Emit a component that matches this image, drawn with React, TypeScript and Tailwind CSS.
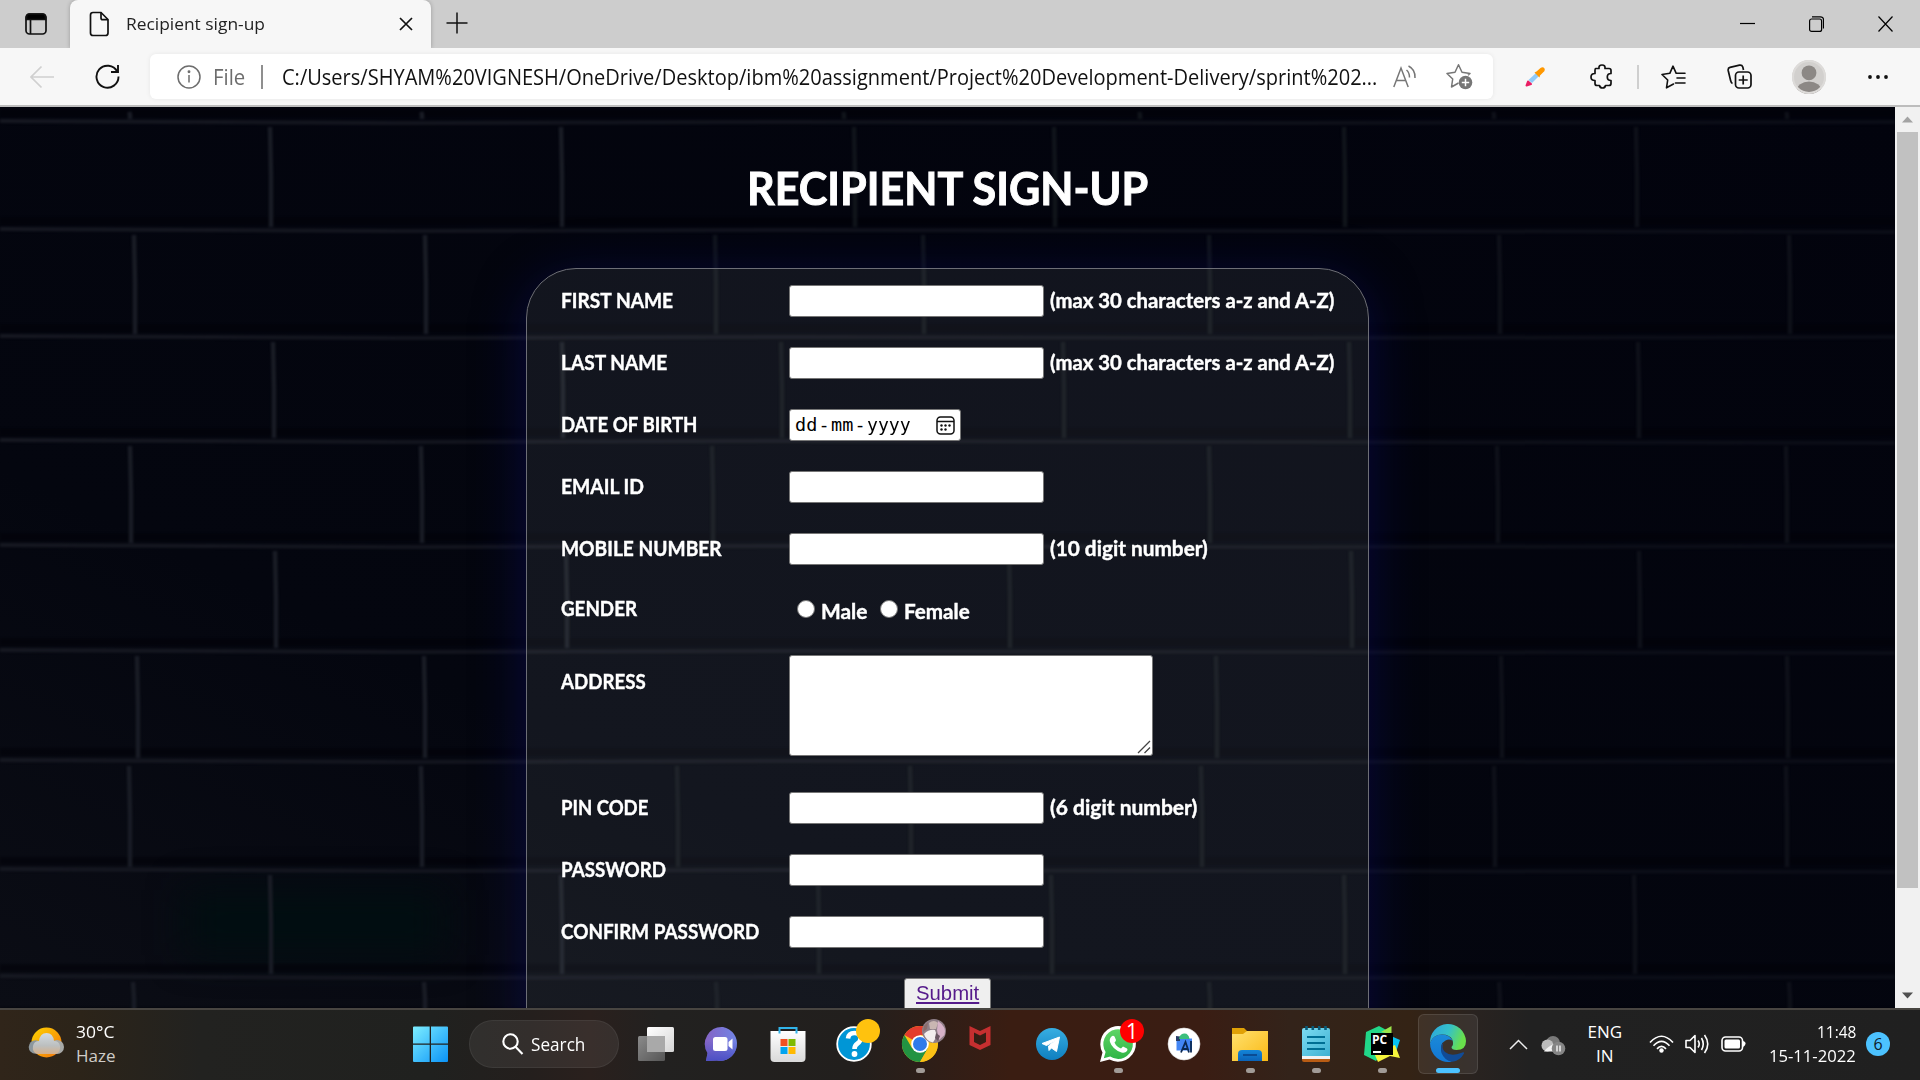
import { useLayoutEffect, useRef, useState } from "react";
import type { ReactNode } from "react";

/** A single line of text stretched horizontally to an exact width. */
function Fit({ w, className = "", children }: { w: number; className?: string; children: ReactNode }) {
  const ref = useRef<HTMLSpanElement>(null);
  const [scale, setScale] = useState(1);
  useLayoutEffect(() => {
    if (ref.current) setScale(w / ref.current.offsetWidth);
  }, [w]);
  return (
    <span className={`block shrink-0 ${className}`} style={{ width: w }}>
      <span ref={ref} className="inline-block origin-left whitespace-nowrap" style={{ transform: `scaleX(${scale})` }}>
        {children}
      </span>
    </span>
  );
}

const UI = "font-['Open_Sans','Noto_Sans',sans-serif]";
const BODY = "font-['Lato',sans-serif] font-bold [-webkit-text-stroke:0.4px_white]";

/* ---------- brick wall ---------- */

const COURSES: { top: number; bottom: number; joints: number[] }[] = [
  { top: 107, bottom: 122, joints: [130, 422, 844, 1140, 1494, 1787] },
  { top: 122, bottom: 230, joints: [271, 562, 855, 1055, 1345, 1637] },
  { top: 230, bottom: 337, joints: [135, 426, 716, 924, 1210, 1500, 1790] },
  { top: 337, bottom: 441, joints: [274, 563, 782, 1064, 1350, 1639] },
  { top: 441, bottom: 546, joints: [131, 422, 713, 1210, 1498, 1787] },
  { top: 546, bottom: 651, joints: [276, 567, 1010, 1352, 1640] },
  { top: 651, bottom: 761, joints: [138, 425, 1217, 1502, 1788] },
  { top: 761, bottom: 870, joints: [130, 422, 678, 911, 1202, 1495, 1787] },
  { top: 870, bottom: 977, joints: [271, 562, 819, 1052, 1345, 1635] },
  { top: 977, bottom: 1020, joints: [134, 425, 717, 1210, 1500, 1790] },
];

function Bricks() {
  return (
    <svg className="absolute inset-0" width="1895" height="901" viewBox="0 107 1895 901">
      <defs>
        <filter id="soft" x="-5%" y="-5%" width="110%" height="110%" colorInterpolationFilters="sRGB">
          <feGaussianBlur stdDeviation="1.2" />
        </filter>
        <filter id="patch" x="-50%" y="-100%" width="200%" height="300%" colorInterpolationFilters="sRGB">
          <feGaussianBlur stdDeviation="18" />
        </filter>
        <linearGradient id="wall" x1="0" y1="1" x2="1" y2="0">
          <stop offset="0" stopColor="#0b0d15" />
          <stop offset=".3" stopColor="#04060f" />
          <stop offset="1" stopColor="#02030d" />
        </linearGradient>
        <linearGradient id="mortar" gradientUnits="userSpaceOnUse" x1="0" y1="0" x2="1895" y2="0">
          <stop offset="0" stopColor="#161821" />
          <stop offset=".5" stopColor="#10121b" />
          <stop offset="1" stopColor="#0b0d17" />
        </linearGradient>
      </defs>
      <rect y="107" width="1895" height="901" fill="url(#wall)" />
      <rect x="185" y="890" width="260" height="65" fill="#010e11" filter="url(#patch)" />
      <g filter="url(#soft)" fill="none">
        {COURSES.map((c, i) => (
          <g key={c.top}>
            <path d={`M0 ${c.bottom - 9}H1895`} stroke="#010109" strokeOpacity=".6" strokeWidth="7" />
            <path
              d={`M0 ${c.bottom - 1}L400 ${c.bottom + 1}L800 ${c.bottom}L1300 ${c.bottom + 1}L1895 ${c.bottom + (i % 2 ? 2 : 0)}`}
              stroke="url(#mortar)"
              strokeWidth="4"
            />
            {c.joints.map((x) => (
              <path
                key={x}
                d={`M${x - 1} ${c.top + 5}L${x} ${(c.top + c.bottom) / 2}L${x} ${c.bottom - 3}`}
                stroke={x < 600 ? "#191c25" : x < 1400 ? "#10141b" : "#0e1019"}
                strokeWidth="4.500"
              />
            ))}
          </g>
        ))}
      </g>
    </svg>
  );
}

/* ---------- browser chrome ---------- */

function TabStrip() {
  return (
    <div className="flex h-12 items-center bg-[#cdcdcd] pl-[25px] pr-[27px]">
      <svg className="shrink-0" width="22" height="24" viewBox="0 0 22 24" fill="none" stroke="#111" strokeWidth="1.7">
        <rect x="1" y="2" width="20" height="20" rx="3.5" />
        <path d="M1.5 7.5V5q0-3 3-3h13q3 0 3 3v2.500z" fill="#000" />
        <path d="M5.500 8v14" />
      </svg>
      <div className="ml-[23px] flex h-12 w-[361px] shrink-0 items-center rounded-t-[8px] bg-[#f7f7f7] pl-[19px] pr-[18px] shadow-[0_0_4px_rgba(0,0,0,0.25)]">
        <svg width="20" height="26" viewBox="0 0 20 26" fill="none" stroke="#111" strokeWidth="1.7">
          <path d="M4 1.500h8L19 8.500V22q0 2.500-2.500 2.500H4Q1.500 24.500 1.500 22V4Q1.500 1.500 4 1.500z" />
          <path d="M12 1.500V7q0 1.700 1.700 1.700H19" />
        </svg>
        <Fit w={139} className={`ml-[17px] text-[17px] leading-6 text-[#222] ${UI}`}>
          Recipient sign-up
        </Fit>
        <svg className="ml-auto" width="14" height="14" viewBox="0 0 14 14" stroke="#111" strokeWidth="1.700">
          <path d="M1 1L13 13M13 1L1 13" />
        </svg>
      </div>
      <svg className="mb-[2px] ml-[15px]" width="22" height="22" viewBox="0 0 22 22" stroke="#111" strokeWidth="1.500">
        <path d="M11 .5V21.500M.5 11H21.500" />
      </svg>
      <div className="ml-auto flex items-center gap-[54px]">
        <svg width="15" height="16" viewBox="0 0 15 16" stroke="#000" strokeWidth="1.200">
          <path d="M0 7.500H15" />
        </svg>
        <svg width="15" height="16" viewBox="0 0 15 16" fill="none" stroke="#000" strokeWidth="1.200">
          <rect x=".6" y="3" width="12" height="12.400" rx="2" />
          <path d="M3 .8h8.500q3 0 3 3V12.500" />
        </svg>
        <svg width="15" height="16" viewBox="0 0 15 16" stroke="#000" strokeWidth="1.200">
          <path d="M.5.5L14.500 15.500M14.500.5L.5 15.500" />
        </svg>
      </div>
    </div>
  );
}

function Toolbar() {
  return (
    <div className="flex h-[59px] items-center border-b-2 border-[#bdbdbd] bg-[#f7f7f7] pl-[30px]">
      <svg className="shrink-0" width="24" height="24" viewBox="0 0 24 24" fill="none" stroke="#d0d0d0" strokeWidth="1.700">
        <path d="M24 12H1.500M11.500 1.500L1 12L11.500 22.500" />
      </svg>
      <svg className="ml-[41px] shrink-0" width="25" height="25" viewBox="0 0 25 25" fill="none" stroke="#111" strokeWidth="1.900">
        <path d="M22.200 7.500A11 11 0 1 0 23.500 12.500" />
        <path d="M23 1V8H16" />
      </svg>
      <div className="ml-[30px] flex h-[45px] w-[1343px] shrink-0 items-center rounded-md bg-white pl-[27px] shadow-[0_0_5px_rgba(0,0,0,0.07)]">
        <svg width="24" height="24" viewBox="0 0 24 24" fill="none" stroke="#6d6d6d" strokeWidth="1.500">
          <circle cx="12" cy="12" r="11" />
          <path d="M12 10V17.500" />
          <circle cx="12" cy="6.800" r=".7" fill="#6d6d6d" />
        </svg>
        <Fit w={32} className={`ml-[12px] text-[21px] leading-7 text-[#6d6d6d] ${UI}`}>
          File
        </Fit>
        <div className="ml-[16px] h-6 w-[1.500px] bg-[#8f8f8f]" />
        <Fit w={1095} className={`ml-[19px] text-[21px] leading-7 text-[#111] ${UI}`}>
          C:/Users/SHYAM%20VIGNESH/OneDrive/Desktop/ibm%20assignment/Project%20Development-Delivery/sprint%202...
        </Fit>
        <svg className="ml-[16.500px] shrink-0" width="24" height="24" viewBox="0 0 24 24" fill="none" stroke="#767676" strokeWidth="1.500">
          <path d="M.8 22L8 3L15.200 22M3.300 15.500H12.700" />
          <path d="M13.500 5Q16.500 7.500 16.500 12.500M15.500 1Q22.500 4.500 22 13" />
        </svg>
        <svg className="ml-[29px] shrink-0" width="27" height="27" viewBox="0 0 27 27" fill="none" stroke="#767676" strokeWidth="1.500">
          <path d="M12.500 20L5.500 24L6.700 16L1 10.500L9 9.300L12.500 1.800L16 9.300L24 10.500L22 12.300" strokeLinejoin="round" />
          <circle cx="19.500" cy="19.500" r="6.800" fill="#767676" stroke="none" />
          <path d="M19.500 15.800V23.200M15.800 19.500H23.200" stroke="#fff" />
        </svg>
      </div>
      <svg className="ml-[32px] shrink-0" width="20" height="20" viewBox="0 0 20 20">
        <path d="M1.500 18.500L3 14.500L6 17z" fill="#e91e63" stroke="#e91e63" strokeWidth="2" strokeLinejoin="round" />
        <path d="M3.500 13L11 6L14 9L7 16z" fill="#90caf9" />
        <path d="M9.500 5.500L11.500 4.500L15.500 1Q18-.5 19.500 1.500Q20.500 3.500 18 5.500L15 8.500L14.500 10.500z" fill="#ff9800" />
      </svg>
      <svg className="ml-[45px] shrink-0" width="23" height="25" viewBox="0 0 23 25" fill="none" stroke="#111" strokeWidth="1.700" strokeLinejoin="round">
        <path d="M5.500 4.500H9Q8.500 1 12 1T15 4.500H19Q21 4.500 21 6.500V9.500Q17.300 9.500 17.300 13T21 16.500V19.500Q21 21.500 19 21.500H15.500Q15 24 12.500 24T9.500 21.500H7Q5 21.500 5 19.500V16.500Q1 16.500 1 13T5 9.500V6.500Q5 4.500 5.500 4.500z" />
      </svg>
      <div className="ml-[24px] h-6 w-[1.500px] bg-[#cfcfcf]" />
      <svg className="ml-[22.500px] shrink-0" width="25" height="24" viewBox="0 0 25 24" fill="none" stroke="#111" strokeWidth="1.600" strokeLinejoin="round" strokeLinecap="round">
        <path d="M12.500 19L5.500 22.800L6.700 15L1 9.500L8.800 8.300L12 1.200L15.200 8.300H24M16 13H24M14.500 18H24" />
      </svg>
      <svg className="ml-[41px] shrink-0" width="25" height="25" viewBox="0 0 25 25" fill="none" stroke="#111" strokeWidth="1.700">
        <path d="M5.500 19.500Q4.200 19 3.600 16.500L1.200 6.500Q.8 4 3 3.400L12.500 1.200Q15 .8 15.800 3L16.500 6" />
        <rect x="8.500" y="8" width="15.500" height="16" rx="3.500" />
        <path d="M16.200 11.500V20.500M11.700 16H20.700" />
      </svg>
      <svg className="ml-[40px] shrink-0" width="34" height="34" viewBox="0 0 34 34">
        <defs>
          <clipPath id="profile"><circle cx="17" cy="17" r="17" /></clipPath>
        </defs>
        <g clipPath="url(#profile)">
          <rect width="34" height="34" fill="#d2d0ce" />
          <circle cx="17" cy="12.800" r="7.400" fill="#8c8885" />
          <ellipse cx="17" cy="31" rx="12.500" ry="9.500" fill="#8c8885" />
        </g>
        <circle cx="17" cy="17" r="16" fill="none" stroke="#dddbd9" strokeWidth="2" />
      </svg>
      <svg className="ml-[42px] shrink-0" width="20" height="4" viewBox="0 0 20 4" fill="#111">
        <circle cx="2" cy="2" r="1.900" /><circle cx="10" cy="2" r="1.900" /><circle cx="18" cy="2" r="1.900" />
      </svg>
    </div>
  );
}

/* ---------- form ---------- */

const BOX = "shrink-0 rounded-[3px] border border-[#767676] bg-white";

function Label({ w, children }: { w: number; children: string }) {
  return (
    <div className="w-[228px] shrink-0 pb-[2px]">
      <Fit w={w} className="leading-6">{children}</Fit>
    </div>
  );
}

function Row({ label, w, hint, hintW = 0 }: { label: string; w: number; hint?: string; hintW?: number }) {
  return (
    <div className="flex h-[62px] items-center">
      <Label w={w}>{label}</Label>
      <div className={`h-8 w-[255px] ${BOX}`} />
      {hint && <Fit w={hintW} className="ml-[5.500px] pb-[2px] leading-6">{hint}</Fit>}
    </div>
  );
}

function Radio() {
  return <span className="block size-[18px] shrink-0 rounded-full border-[1.500px] border-[#767676] bg-white" />;
}

function SignUpForm() {
  return (
    <div className={`relative flex w-[1895px] flex-col items-center text-white ${BODY}`}>
      <h1 className="mt-[51px] h-[60px] text-[46px] leading-[60px] [-webkit-text-stroke:1px_white]">
        <Fit w={401}>RECIPIENT SIGN-UP</Fit>
      </h1>
      <div className="mt-[50px] h-[860px] w-[843px] rounded-[50px] border border-[#6d6e76] bg-[rgba(245,248,255,0.065)] pl-[34px] pt-[1px] text-[20px] shadow-[0_10px_50px_rgba(9,12,110,0.5)]">
        <Row label="FIRST NAME" w={112} hint="(max 30 characters a-z and A-Z)" hintW={284} />
        <Row label="LAST NAME" w={106} hint="(max 30 characters a-z and A-Z)" hintW={284} />
        <div className="flex h-[62px] items-center">
          <Label w={136}>DATE OF BIRTH</Label>
          <div className={`flex h-8 w-[172px] items-center pl-[5px] pr-[5px] font-['DejaVu_Sans_Mono',monospace] text-[18.500px] font-normal leading-6 text-black [-webkit-text-stroke:0] ${BOX}`}>
            <Fit w={22}>dd</Fit>
            <span className="w-[14px] text-center">-</span>
            <Fit w={22}>mm</Fit>
            <span className="w-[14px] text-center">-</span>
            <Fit w={44}>yyyy</Fit>
            <svg className="ml-auto" width="19" height="19" viewBox="0 0 19 19" fill="none" stroke="#111" strokeWidth="1.500">
              <rect x="1" y="1" width="17" height="17" rx="3.500" />
              <path d="M1 5.500H18" />
              <g fill="#111" stroke="none">
                <circle cx="5.500" cy="9.500" r="1.200" /><circle cx="9.500" cy="9.500" r="1.200" /><circle cx="13.500" cy="9.500" r="1.200" />
                <circle cx="5.500" cy="13.500" r="1.200" /><circle cx="9.500" cy="13.500" r="1.200" />
              </g>
            </svg>
          </div>
        </div>
        <Row label="EMAIL ID" w={83} />
        <Row label="MOBILE NUMBER" w={161} hint="(10 digit number)" hintW={158} />
        <div className="flex h-[62px] items-center pb-[4px]">
          <Label w={76}>GENDER</Label>
          <div className="flex items-center pl-2">
            <Radio />
            <Fit w={46} className="ml-[6px] mt-[4px] leading-6">Male</Fit>
            <span className="w-[13px]" />
            <Radio />
            <Fit w={66} className="ml-[6px] mt-[4px] leading-6">Female</Fit>
          </div>
        </div>
        <div className="flex h-[135px] items-start pt-[13px]">
          <div className="pt-[14px]"><Label w={85}>ADDRESS</Label></div>
          <div className={`flex h-[101px] w-[364px] items-end justify-end p-[1px] ${BOX}`}>
            <svg width="14" height="14" viewBox="0 0 14 14" stroke="#444" strokeWidth="1.300">
              <path d="M1 13L13 1M7.500 13L13 7.500" />
            </svg>
          </div>
        </div>
        <Row label="PIN CODE" w={87} hint="(6 digit number)" hintW={147} />
        <Row label="PASSWORD" w={105} />
        <Row label="CONFIRM PASSWORD" w={198} />
        <div className="mt-[15px] flex justify-center pr-[34px]">
          <div className="h-9 w-[87px] rounded-[3px] border border-[#767676] bg-[#efefef] pl-[11px] font-['Liberation_Sans',sans-serif] text-[20px] font-normal leading-7 text-[#551a8b] [-webkit-text-stroke:0]">
            <Fit w={63}><span className="underline underline-offset-2">Submit</span></Fit>
          </div>
        </div>
      </div>
    </div>
  );
}

function Scrollbar() {
  return (
    <div className="flex w-[25px] shrink-0 flex-col items-center bg-[#f1f1f1]">
      <svg className="my-[9px]" width="11" height="7" viewBox="0 0 11 7"><path d="M0 6.500L5.500.5L11 6.500z" fill="#a3a3a3" /></svg>
      <div className="h-[756px] w-[21px] bg-[#c1c1c1]" />
      <svg className="mb-[9px] mt-auto" width="11" height="7" viewBox="0 0 11 7"><path d="M0 .5L5.500 6.500L11 .5z" fill="#505050" /></svg>
    </div>
  );
}

/* ---------- taskbar ---------- */

function TaskApp({ running, wide, children }: { running?: boolean; wide?: boolean; children: ReactNode }) {
  return (
    <div className="flex w-[66px] shrink-0 justify-center">
      <div className={wide ? "relative flex h-[60px] w-[60px] items-center justify-center rounded-md border border-white/10 bg-white/[0.07]" : "relative flex h-[60px] w-[60px] items-center justify-center"}>
        {children}
        {running && <span className="absolute bottom-[1px] left-[25.500px] h-[5px] w-[9px] rounded-full bg-[#a19b97]" />}
        {wide && <span className="absolute bottom-0 left-[17px] h-[5px] w-6 rounded-full bg-[#4cc2ff]" />}
      </div>
    </div>
  );
}

const ICON = { width: 48, height: 48, viewBox: "0 0 48 48", overflow: "visible" };

function TaskIcons() {
  return (
    <>
      <TaskApp>
        <svg {...ICON}>
          <defs>
            <linearGradient id="tvw" x1="0" y1="0" x2="1" y2="1"><stop stopColor="#fff" /><stop offset="1" stopColor="#d5d5d5" /></linearGradient>
            <linearGradient id="tvg" x1="0" y1="0" x2="1" y2="1"><stop stopColor="#8b8b8b" /><stop offset="1" stopColor="#565656" /></linearGradient>
          </defs>
          <rect x="6" y="16" width="27" height="25" rx="1.500" fill="url(#tvg)" />
          <rect x="15" y="7" width="27" height="25" rx="1.500" fill="url(#tvw)" />
          <path d="M15 16H33V32H15z" fill="#a9a9a9" />
        </svg>
      </TaskApp>
      <TaskApp>
        <svg {...ICON}>
          <defs><linearGradient id="chat" x1="0" y1="0" x2="1" y2="0"><stop stopColor="#8563c4" /><stop offset="1" stopColor="#7185e6" /></linearGradient>
            <linearGradient id="chat2" x1="0" y1="0" x2="0" y2="1"><stop offset=".4" stopColor="#4b4fc4" stopOpacity="0" /><stop offset="1" stopColor="#4b4fc4" /></linearGradient></defs>
          {["url(#chat)", "url(#chat2)"].map((f) => (
            <path key={f} d="M24 7A17 17 0 1 1 18 40.500L7 41L8.500 33A17 17 0 0 1 24 7z" fill={f} transform="translate(1 0)" />
          ))}
          <rect x="15" y="17" width="14.500" height="14" rx="2.500" fill="#fff" />
          <path d="M30.500 22L34.500 18.500V29.500L30.500 26z" fill="#fff" />
        </svg>
      </TaskApp>
      <TaskApp>
        <svg {...ICON}>
          <defs><linearGradient id="store" x1="0" y1="0" x2="0" y2="1"><stop stopColor="#fff" /><stop offset="1" stopColor="#d9d9d9" /></linearGradient></defs>
          <path d="M15.500 13.500V8H32.500V13.500" fill="none" stroke="#31b4ea" strokeWidth="2" />
          <path d="M6.500 11H41.500V38Q41.500 42 37.500 42H10.500Q6.500 42 6.500 38z" fill="url(#store)" />
          <path d="M15.500 11V13.500M32.500 11V13.500" stroke="#31b4ea" strokeWidth="2" />
          <path d="M16.500 19H23.500V26H16.500z" fill="#f25022" /><path d="M24.500 19H31.500V26H24.500z" fill="#7fba00" />
          <path d="M16.500 27H23.500V34H16.500z" fill="#00a4ef" /><path d="M24.500 27H31.500V34H24.500z" fill="#ffb900" />
        </svg>
      </TaskApp>
      <TaskApp>
        <svg {...ICON}>
          <circle cx="24" cy="24" r="16.800" fill="#0096d6" stroke="#fff" strokeWidth="1.800" />
          <path d="M18 18.500Q18.500 13 24.500 13T30.500 18.500Q30.500 21.500 27.500 23.500Q24.500 25.500 24.500 29" fill="none" stroke="#fff" strokeWidth="4.600" />
          <circle cx="24.500" cy="34" r="2.900" fill="#fff" />
          <circle cx="38" cy="11" r="12" fill="#ffc20e" />
        </svg>
      </TaskApp>
      <TaskApp running>
        <svg {...ICON}>
          <circle cx="24" cy="24" r="18" fill="#fbc116" />
          <path d="M24 24L8.400 15A18 18 0 0 1 39.600 15H24z" fill="#e33b2e" />
          <path d="M24 24L31.800 28.500L24 42A18 18 0 0 1 8.400 15L16.200 28.500z" fill="#229342" />
          <path d="M24 15.500H39.600A18 18 0 0 1 24 42L31.800 28.500z" fill="#fbc116" />
          <circle cx="24" cy="24" r="8.800" fill="#fff" /><circle cx="24" cy="24" r="7" fill="#2f7bea" />
          <circle cx="38" cy="11" r="12" fill="#8f7f88" />
          <path d="M28 14Q33 9 39 10Q42 16 37 22.500Q30 21 28 14z" fill="#f3eeee" />
          <path d="M33 3Q38-1 42 3L40 9L34 9z" fill="#c9b6b2" />
          <path d="M42 1Q51 7 48.500 15L43 20L41 10z" fill="#d6b2c8" />
          <path d="M28 6L32 2L31 9L27 12z" fill="#8a6d6c" />
          <path d="M40 13L44 16L42 21L39 18z" fill="#6b5763" />
        </svg>
      </TaskApp>
      <TaskApp>
        <svg {...ICON}>
          <path d="M7.500 6L18 11L28.500 6V25L18 30L7.500 25zM12 12.500V22L18 25L24 22V12.500L18 15.500z" fill="#c52f30" fillRule="evenodd" />
        </svg>
      </TaskApp>
      <TaskApp>
        <svg {...ICON}>
          <defs><linearGradient id="tg" x1="0" y1="0" x2="0" y2="1"><stop stopColor="#37aee2" /><stop offset="1" stopColor="#0f7fc0" /></linearGradient></defs>
          <circle cx="24" cy="24" r="16" fill="url(#tg)" />
          <path d="M14 23.500L31.500 17L28.500 31.500L23.500 28L21 30.500L20.500 26L28 20L18.500 25.500z" fill="#fff" stroke="#fff" strokeLinejoin="round" />
        </svg>
      </TaskApp>
      <TaskApp running>
        <svg {...ICON}>
          <defs><linearGradient id="wa" x1="0" y1="0" x2="0" y2="1"><stop stopColor="#5fd565" /><stop offset="1" stopColor="#2fb546" /></linearGradient></defs>
          <path d="M6 42L8.500 32.500A17.800 17.800 0 1 1 15.500 39.500z" fill="#fff" />
          <path d="M9.800 38.300L11.600 32A14.800 14.800 0 1 1 16.200 36.600z" fill="url(#wa)" />
          <path d="M17.500 16.500Q19 15 20.500 16.500L22 20Q22 21 20.500 22.500Q22.500 27 27 28.500L29 26.500L33 28.500Q34 29 33 31Q31 33.500 27.500 32.500Q18.500 29.500 16 22Q15 19 17.500 16.500z" fill="#fff" />
          <circle cx="38" cy="11" r="12" fill="#f00" />
        </svg>
        <span className={`absolute left-[32px] top-[3px] w-6 text-center text-[21px] leading-7 text-white ${UI}`}>1</span>
      </TaskApp>
      <TaskApp>
        <svg {...ICON}>
          <circle cx="24" cy="24" r="16" fill="#fff" stroke="#ddd" strokeWidth=".6" />
          <path d="M16.500 18.500H32V30.500H16.500z" fill="#4285f4" />
          <path d="M16 16L20 16.500V21H16z" fill="#263c68" />
          <path d="M19 19Q19.500 14 24 13.500T29.500 19z" fill="#3bbf7c" />
          <path d="M21 32.500L25.500 22L29 32.500M22.500 29H28" fill="none" stroke="#0a2852" strokeWidth="1.800" />
          <path d="M31 21V32.500" stroke="#0a2852" strokeWidth="1.800" />
        </svg>
      </TaskApp>
      <TaskApp running>
        <svg {...ICON}>
          <defs><linearGradient id="fold" x1="0" y1="0" x2="1" y2="1"><stop stopColor="#ffe16e" /><stop offset="1" stopColor="#fab915" /></linearGradient>
            <linearGradient id="foldb" x1="0" y1="0" x2="0" y2="1"><stop stopColor="#1385d8" /><stop offset="1" stopColor="#0b63b8" /></linearGradient></defs>
          <path d="M6 8H18L21.500 11.500V16H6z" fill="#e0a106" />
          <path d="M6 14H17L21 11H42V41H6z" fill="url(#fold)" />
          <path d="M12 41V34Q12 30 16 30H32Q36 30 36 34V41z" fill="url(#foldb)" />
          <path d="M17 35H31" stroke="#0a4c94" strokeWidth="2" />
        </svg>
      </TaskApp>
      <TaskApp running>
        <svg {...ICON}>
          <defs><linearGradient id="note" x1="0" y1="0" x2="1" y2="1"><stop stopColor="#7cdcf2" /><stop offset="1" stopColor="#3fb1d2" /></linearGradient></defs>
          <path d="M10 36H38V40Q38 42 36 42H12Q10 42 10 40z" fill="#b95c14" />
          <path d="M10 34H38V39H10z" fill="#f2f2f2" />
          <path d="M12 8H36Q38 8 38 10V36H10V10Q10 8 12 8z" fill="url(#note)" />
          <path d="M15 17H33M15 23H33M15 29H33" stroke="#006f94" strokeWidth="2" />
          <path d="M14.500 6V10M20.800 6V10M27.200 6V10M33.500 6V10" stroke="#075a78" strokeWidth="2.600" />
        </svg>
      </TaskApp>
      <TaskApp running>
        <svg {...ICON}>
          <path d="M8 12L21 6L32 12L26 30L18 41L6 35z" fill="#21d789" />
          <path d="M33 16L42 20L38 32L33 30z" fill="#07c3f2" />
          <path d="M33.500 6V14L23 12z" fill="#9be54b" />
          <path d="M37 25L42 38L32 36L20 42L16 33z" fill="#f5f53c" />
          <path d="M13 13H35V35H13z" fill="#000" />
          <path d="M15 32H23" stroke="#fff" strokeWidth="2" />
        </svg>
        <span className={`absolute left-[20px] top-[18px] text-[12px] font-bold leading-4 text-white ${UI}`}>PC</span>
      </TaskApp>
      <TaskApp wide>
        <svg {...ICON}>
          <defs>
            <linearGradient id="e1" x1="0" y1="0" x2="1" y2=".3"><stop stopColor="#2aa4e0" /><stop offset=".55" stopColor="#35c1c8" /><stop offset="1" stopColor="#69e04b" /></linearGradient>
            <linearGradient id="e2" x1="0" y1="0" x2="0" y2="1"><stop stopColor="#1b8ad8" /><stop offset="1" stopColor="#1276d3" /></linearGradient>
          </defs>
          <path d="M6 23A18 18 0 0 1 42 21Q42 30 32.500 30Q27.500 30 27.500 27Q30 25 28.500 20Q26 14.500 18 14.500Q9 14.500 6 23z" fill="url(#e1)" />
          <path d="M6 23Q9 14.500 18 14.500Q26 14.500 28.800 21Q25.500 18.500 21.500 20.500Q15 24 18 32.500Q21 39.500 28 41.500Q20 43.500 13 38Q6 32 6 23z" fill="url(#e2)" />
          <path d="M19.500 22.500Q17 28 21 32Q27 37 37 33Q40.500 31.500 40 33.500Q36 41 28 41.700Q20.500 40.500 17.500 33Q16 26 19.500 22.500z" fill="#114b96" />
        </svg>
      </TaskApp>
    </>
  );
}

function Taskbar() {
  return (
    <div className={`flex h-[72px] items-center border-t-2 border-[#484541] bg-[linear-gradient(90deg,#30251a_0px,#2c2419_80px,#222220_200px,#20211f_430px,#241f1d_530px,#2a201d_590px,#222120_660px,#221f1d_850px,#3a1d12_1010px,#3a1d13_1200px,#33231a_1290px,#342315_1410px,#292320_1475px,#212121_1530px,#202020_1920px)] pb-[2px] text-white ${UI}`}>
      <svg className="ml-[28px] shrink-0" width="37" height="34" viewBox="0 0 37 34">
        <defs>
          <linearGradient id="sun" x1="0" y1="0" x2="1" y2="1"><stop stopColor="#ffd500" /><stop offset="1" stopColor="#f2720c" /></linearGradient>
          <linearGradient id="haze" x1="0" y1="0" x2="0" y2="1"><stop stopColor="#d3dce2" /><stop offset=".6" stopColor="#bcbfbf" /><stop offset="1" stopColor="#d6b08a" /></linearGradient>
        </defs>
        <circle cx="18.500" cy="15.500" r="15" fill="url(#sun)" />
        <circle cx="7.500" cy="20" r="6.800" fill="#8c979d" /><circle cx="29" cy="20" r="7" fill="#a7a9a7" />
        <path d="M9 27Q4 25 5 19Q6 14 11 14Q12 6 18.500 6T26 14Q31 14 32 19T28 27z" fill="url(#haze)" />
      </svg>
      <div className="ml-[11px] w-[60px] text-[17px] leading-6">
        <Fit w={38}>30°C</Fit>
        <Fit w={40} className="text-[#cfccc8]">Haze</Fit>
      </div>
      <svg className="ml-[277px] shrink-0" width="35" height="36" viewBox="0 0 35 36">
        <defs><linearGradient id="win" x1="0" y1="0" x2="1" y2="1"><stop stopColor="#7deeff" /><stop offset="1" stopColor="#0a93f8" /></linearGradient></defs>
        <path d="M1 .5H16.700V17.400H0V1.500Q0 .5 1 .5zM18 .5H34Q35 .5 35 1.500V17.400H18zM0 18.700H16.700V36H1Q0 36 0 35zM18 18.700H35V35Q35 36 34 36H18z" fill="url(#win)" />
      </svg>
      <div className="ml-[21px] flex h-12 w-[150px] shrink-0 items-center rounded-full border border-white/[0.06] bg-white/[0.07] pl-[32px]">
        <svg width="22" height="22" viewBox="0 0 22 22" fill="none" stroke="#fff" strokeWidth="2.100">
          <circle cx="8.500" cy="8.500" r="7.200" /><path d="M13.500 13.800L20.500 21" />
        </svg>
        <Fit w={54} className="ml-[7px] text-[17.500px] leading-6">Search</Fit>
      </div>
      <div className="ml-1 flex"><TaskIcons /></div>
      <svg className="ml-[27.500px] shrink-0" width="19" height="11" viewBox="0 0 19 11" fill="none" stroke="#eee" strokeWidth="1.500"><path d="M1 10L9.500 1.500L18 10" /></svg>
      <svg className="ml-[13.500px] mt-[3px] shrink-0" width="25" height="22" viewBox="0 0 25 22">
        <circle cx="12" cy="8" r="7" fill="#7a7a7a" /><circle cx="6.500" cy="10.500" r="6" fill="#bdbdbd" /><path d="M3 16.500Q8 10 14 9V16.500z" fill="#f2f2f2" />
        <circle cx="17.500" cy="13.500" r="6.800" fill="#858585" /><path d="M16 10.500V16.500M19 10.500V16.500" stroke="#fff" strokeWidth="1.300" />
      </svg>
      <div className="ml-[21px] flex w-[36px] shrink-0 flex-col items-center text-[17px] leading-6">
        <Fit w={35}>ENG</Fit>
        <Fit w={18}>IN</Fit>
      </div>
      <svg className="ml-[26px] shrink-0" width="25" height="18" viewBox="0 0 25 18" fill="none" stroke="#fff" strokeWidth="1.700">
        <path d="M1 7.500Q12.500-5 24 7.500M4.500 10.800Q12.500 2 20.500 10.800M8 13.800Q12.500 9 17 13.800" /><circle cx="12.500" cy="15.500" r="2.200" fill="#fff" stroke="none" />
      </svg>
      <svg className="ml-[11px] shrink-0" width="25" height="20" viewBox="0 0 25 20" fill="none" stroke="#fff" strokeWidth="1.600">
        <path d="M1 6.500H5L10 1.500V18.500L5 13.500H1z" strokeLinejoin="round" /><path d="M13 6.500Q15.500 10 13 13.500M16.500 4Q20 10 16.500 16M19.500 1Q26 10 19.500 19" />
      </svg>
      <svg className="ml-[11px] shrink-0" width="25" height="16" viewBox="0 0 25 16">
        <rect x="1" y="1" width="20.500" height="14" rx="3.500" fill="none" stroke="#fff" strokeWidth="1.600" /><rect x="3.500" y="3.500" width="15.500" height="9" rx="1.500" fill="#fff" /><path d="M22 5Q25 6 24.500 8T22 11z" fill="#fff" />
      </svg>
      <div className="ml-[23px] flex w-[87px] shrink-0 flex-col items-end text-[17px] leading-6">
        <Fit w={39}>11:48</Fit>
        <Fit w={87}>15-11-2022</Fit>
      </div>
      <span className="ml-[10px] block size-6 shrink-0 rounded-full bg-[#4cc2ff] text-center text-[16px] leading-6 text-[#10202c]">6</span>
    </div>
  );
}

export default function App() {
  return (
    <div className="flex h-[1080px] w-[1920px] flex-col overflow-hidden bg-[#03040e]">
      <TabStrip />
      <Toolbar />
      <div className="flex h-[901px] shrink-0 overflow-hidden">
        <div className="relative w-[1895px] shrink-0 overflow-hidden">
          <Bricks />
          <SignUpForm />
        </div>
        <Scrollbar />
      </div>
      <Taskbar />
    </div>
  );
}
